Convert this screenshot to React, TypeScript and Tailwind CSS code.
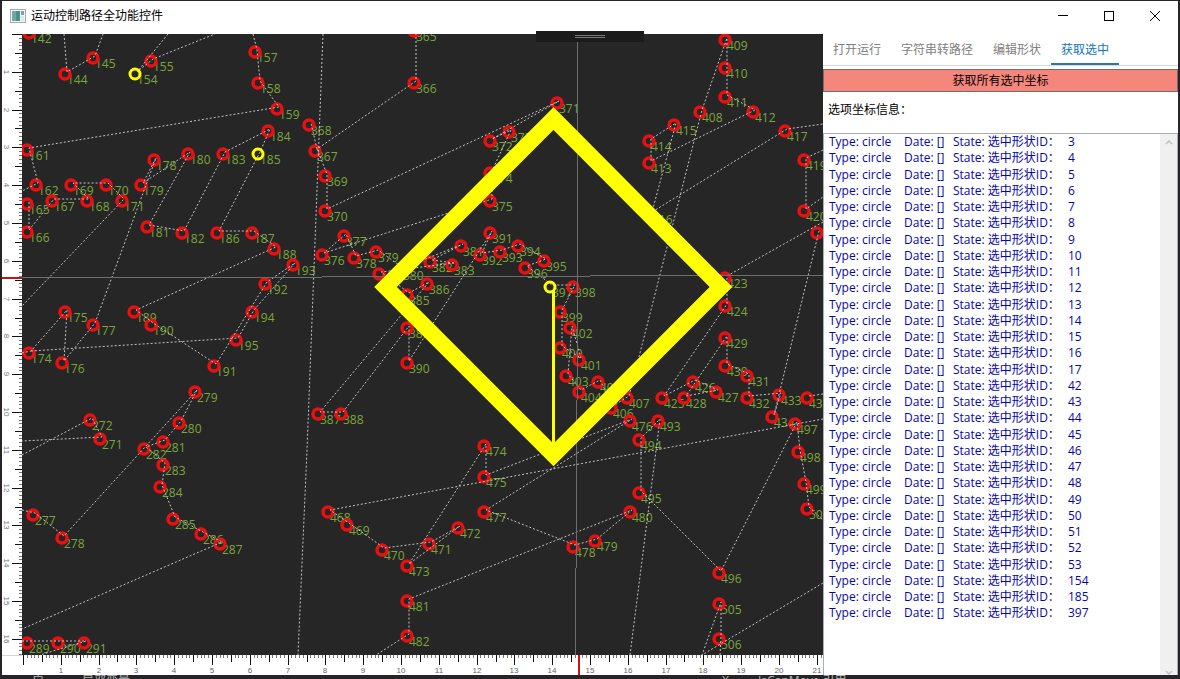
import { useEffect, useRef, useState } from "react";

interface Shape {
  id: number;
  x: number;
  y: number;
  selected?: boolean;
}

type Stop = number | [number, number];

const UNIT = 37.8;

const raw: [number, number, number][] = [
  [142, 29, 33], [144, 65, 74], [145, 93, 58], [154, 135, 74], [155, 151, 61],
  [157, 255, 52], [158, 258, 83], [159, 277, 109], [161, 27, 150], [162, 36, 185],
  [165, 27, 204], [166, 27, 232], [167, 52, 201], [168, 87, 201], [169, 71, 185],
  [170, 106, 185], [171, 122, 201], [174, 29, 353], [175, 65, 312], [176, 62, 363],
  [177, 93, 325], [178, 154, 160], [179, 141, 185], [180, 188, 154], [181, 147, 227],
  [182, 182, 233], [183, 223, 154], [184, 268, 131], [185, 258, 154], [186, 217, 233],
  [187, 252, 233], [188, 274, 249], [189, 134, 312], [190, 151, 325], [191, 214, 366],
  [192, 265, 284], [193, 293, 265], [194, 252, 312], [195, 236, 340],
  [271, 100, 439], [272, 90, 420], [277, 33, 515], [278, 62, 538], [279, 195, 392],
  [280, 179, 423], [281, 163, 442], [282, 144, 449], [283, 163, 465], [284, 160, 487],
  [285, 173, 519], [286, 201, 534], [287, 220, 544], [289, 27, 643], [290, 58, 643],
  [291, 84, 643],
  [365, 414, 31], [366, 414, 83], [367, 315, 151], [368, 309, 125], [369, 325, 176],
  [370, 325, 211], [371, 557, 103], [372, 490, 141], [373, 509, 132], [374, 490, 173],
  [375, 490, 201], [376, 322, 255], [377, 344, 236], [378, 354, 258], [379, 376, 252],
  [380, 401, 270], [384, 379, 274], [381, 461, 246], [382, 430, 262], [383, 452, 265],
  [385, 407, 295], [386, 427, 284], [387, 318, 414], [388, 341, 414], [389, 407, 328],
  [390, 407, 363], [391, 490, 233], [392, 480, 255], [393, 500, 252], [394, 518, 246],
  [395, 544, 261], [396, 525, 268], [397, 550, 287], [398, 573, 287], [399, 560, 312],
  [400, 560, 348], [401, 579, 360], [402, 570, 328], [403, 566, 376], [404, 579, 392],
  [405, 598, 382], [406, 611, 408], [407, 627, 398], [408, 700, 112], [409, 725, 40],
  [410, 725, 68], [411, 725, 97], [412, 753, 112], [413, 649, 163], [414, 649, 141],
  [415, 674, 125], [416, 650, 214], [417, 785, 131], [419, 804, 160], [420, 804, 211],
  [421, 817, 233], [423, 725, 278], [424, 725, 306], [425, 662, 398], [426, 693, 382],
  [427, 716, 392], [428, 684, 398], [429, 725, 338], [430, 725, 366], [431, 747, 376],
  [432, 747, 398], [433, 779, 395], [434, 772, 417], [435, 807, 398],
  [468, 328, 512], [469, 347, 525], [470, 382, 550], [471, 429, 544], [472, 458, 528],
  [473, 407, 566], [474, 484, 446], [475, 484, 477], [476, 630, 421], [477, 484, 512],
  [478, 573, 547], [479, 595, 541], [480, 630, 512], [481, 407, 601], [482, 407, 636],
  [493, 658, 421], [494, 639, 440], [495, 639, 493], [496, 719, 573], [497, 795, 424],
  [498, 798, 452], [499, 804, 484], [500, 807, 509], [505, 719, 604], [506, 719, 639],
];

const picked = [
  3, 4, 5, 6, 7, 8, 9, 10, 11, 12, 13, 14, 15, 16, 17, 42, 43, 44, 45, 46, 47, 48,
  49, 50, 51, 52, 53, 154, 185, 397,
];

// shapes that carry no label of their own
const unlabeled = [384, 421];

const shapes: Shape[] = raw.map(([id, x, y]) => ({ id, x, y, selected: picked.includes(id) }));
const byId = new Map(shapes.map((s) => [s.id, s]));

const range = (from: number, to: number) =>
  Array.from({ length: Math.max(0, to - from + 1) }, (_, i) => from + i);

// a stop is a shape id, or a point where the path leaves the view
const paths: Stop[][] = [
  [[64, 34], 144, 145, [103, 34]],
  [[168, 34], 154, 155, [215, 34]],
  [[253, 34], 157, 158, 159, 161, 162, [22, 191]],
  [165, 166, 167, 168, 169, 170, 171, [22, 306]],
  [[22, 353], 174, ...range(175, 195), 174],
  [[22, 455], 272, 271, [22, 441]],
  [[22, 510], 277, 278, 279, 280, 281, 282, 283, 284, 285, 286, 287, [22, 629]],
  [[22, 641], 289, 290, 291, [40, 655]],
  [[323, 34], [307, 450], [298, 655]],
  [365, 366, 367, 368],
  [367, 369, 370, 371, 372, 373, 374, 375, 376, 377, 378, 379, 380, 381, 382, 383],
  [383, 384, 385, 386, 387, 388, 389, 390, ...range(391, 417), [823, 124]],
  [[823, 150], 419, 420, [823, 197]],
  [[823, 222], 423, 424, 425, 426, 427, 428, 429, 430, 431, 432, 433, 434, 421],
  [[823, 394], 435],
  [[823, 419], 468, ...range(469, 482), [376, 655]],
  [[630, 655], 493, 494, 495, 496, 497, 498, 499, 500, [823, 520]],
  [[720, 655], 506, 505, [702, 655], [823, 583]],
];

const toPoints = (stops: Stop[]) =>
  stops
    .map((stop) => {
      if (typeof stop !== "number") return stop.join(",");
      const s = byId.get(stop);
      return s ? `${s.x + 2},${s.y - 2}` : "";
    })
    .join(" ");

const tabs = ["打开运行", "字符串转路径", "编辑形状", "获取选中"];

function Ruler({ vertical, origin, mark }: { vertical?: boolean; origin: number; mark: number }) {
  const ref = useRef<SVGSVGElement>(null);
  const [length, setLength] = useState(0);

  useEffect(() => {
    const el = ref.current;
    if (!el) return;
    const measure = () => {
      const box = el.getBoundingClientRect();
      setLength(vertical ? box.height : box.width);
    };
    measure();
    const observer = new ResizeObserver(measure);
    observer.observe(el);
    return () => observer.disconnect();
  }, [vertical]);

  const units = (length - origin) / UNIT;

  return (
    <svg ref={ref} className="block h-full w-full bg-white" aria-hidden="true">
      {range(0, Math.floor(units * 10)).map((i) => {
        const p = Math.round(origin + (i * UNIT) / 10) + 0.5;
        const len = i % 10 === 0 ? 10 : i % 5 === 0 ? 7 : 3;
        const stroke = i % 5 === 0 ? "#111" : "#777";
        return vertical ? (
          <line key={i} x1={20 - len} x2={20} y1={p} y2={p} stroke={stroke} />
        ) : (
          <line key={i} x1={p} x2={p} y1={0} y2={len} stroke={stroke} />
        );
      })}
      {range(1, Math.floor(units)).map((n) => {
        const p = Math.round(origin + n * UNIT);
        return vertical ? (
          <text key={n} transform={`translate(2 ${p}) rotate(90)`} textAnchor="middle" fontSize={8} fill="#777">
            {n}
          </text>
        ) : (
          <text key={n} x={p} y={18} textAnchor="middle" fontSize={8} fill="#666">
            {n}
          </text>
        );
      })}
      {vertical ? (
        <line x1={0} x2={20} y1={mark} y2={mark} stroke="#b51a1a" strokeWidth={2} />
      ) : (
        <line x1={mark} x2={mark} y1={0} y2={20} stroke="#cc1111" strokeWidth={2} />
      )}
    </svg>
  );
}

function PathCanvas() {
  return (
    <svg className="block h-full w-full bg-[#262626]" role="img" aria-label="路径">
      <g transform="translate(-22 -34)">
        <g fill="#7da63a" fontSize={12} fontWeight={500} fontFamily='"Open Sans", sans-serif'>
          {shapes
            .filter((s) => !unlabeled.includes(s.id))
            .map((s) => (
              <text key={s.id} x={s.x + 2} y={s.y + 10}>
                {s.id}
              </text>
            ))}
        </g>
        <g fill="none" stroke="#e81010" strokeWidth={3.5}>
          {shapes
            .filter((s) => !s.selected)
            .map((s) => (
              <circle key={s.id} cx={s.x} cy={s.y} r={5} />
            ))}
        </g>
        <g fill="none" stroke="#c4c4c4" strokeWidth={1} strokeDasharray="2 2">
          {paths.map((stops, i) => (
            <polyline key={i} points={toPoints(stops)} />
          ))}
        </g>
        <g fill="none" stroke="#6e6e6e" strokeWidth={1}>
          <path d="M22 277.5H322M322 276.5H590M590 275.5H2400" />
          <path d="M577.5 34V400M576.5 400V568M575.5 568V2000" />
        </g>
        <g fill="none" stroke="#ffff00">
          <path d="M553.5 118.5L721 287L553.5 455L385.5 287Z" strokeWidth={16} />
          <path d="M553.5 290V450" strokeWidth={3} />
          {shapes
            .filter((s) => s.selected)
            .map((s) => (
              <circle key={s.id} cx={s.x} cy={s.y} r={5} strokeWidth={3} />
            ))}
        </g>
      </g>
    </svg>
  );
}

function TitleBar() {
  return (
    <header className="flex h-[33px] shrink-0 items-center bg-white">
      <svg className="mb-1 ml-2 shrink-0" width="16" height="14" viewBox="0 0 16 14" aria-hidden="true">
        <rect x="0.5" y="0.5" width="15" height="13" fill="#f2f5f6" stroke="#a3adb3" />
        <rect x="2" y="2" width="8" height="10" fill="#4f8f8b" />
        <rect x="2" y="2" width="4" height="10" fill="#6faaa2" />
        <rect x="11" y="2" width="3" height="4" fill="#7f9fb0" />
        <rect x="11" y="7" width="3" height="5" fill="#dfe6ea" />
      </svg>
      <h1 className="mb-1 ml-1 flex-1 pl-px text-xs text-black">运动控制路径全功能控件</h1>
      <button type="button" aria-label="最小化" className="flex h-full w-[46px] items-center justify-center pb-1">
        <svg width="10" height="10" aria-hidden="true">
          <path d="M0 4.5H10" stroke="#000" />
        </svg>
      </button>
      <button type="button" aria-label="最大化" className="flex h-full w-[46px] items-center justify-center pb-1">
        <svg width="10" height="10" aria-hidden="true">
          <rect x="0.5" y="0.5" width="9" height="9" fill="none" stroke="#000" />
        </svg>
      </button>
      <button type="button" aria-label="关闭" className="flex h-full w-[46px] items-center justify-center pb-1">
        <svg width="10" height="10" aria-hidden="true">
          <path d="M0 0L10 10M10 0L0 10" stroke="#000" />
        </svg>
      </button>
    </header>
  );
}

export default function App() {
  const [active, setActive] = useState("获取选中");

  return (
    <div className="flex h-screen flex-col overflow-hidden bg-[#262429] pt-px font-['Open_Sans','Noto_Sans_CJK_SC',sans-serif]">
      <div className="mx-[2px] flex min-h-0 flex-1 flex-col bg-white">
        <TitleBar />
        <div className="flex min-h-0 flex-1">
          <main className="grid min-w-0 flex-1 grid-cols-[20px_minmax(0,1fr)] grid-rows-[minmax(0,1fr)_20px] font-['Liberation_Sans',sans-serif]">
            <Ruler vertical origin={0} mark={244} />
            <PathCanvas />
            <div className="border-t border-gray-300 bg-white" />
            <Ruler origin={1} mark={557} />
          </main>

          <aside className="flex w-[355px] shrink-0 flex-col bg-white text-xs">
            <div role="tablist" className="flex h-8 shrink-0 border-b border-[#d5dce1]">
              {tabs.map((tab) => (
                <button
                  key={tab}
                  type="button"
                  role="tab"
                  aria-selected={tab === active}
                  onClick={() => setActive(tab)}
                  className={`border-b-2 px-[10px] pt-0.5 ${
                    tab === active ? "border-[#2a7aa8] text-[#0f75bd]" : "border-transparent text-[#808080]"
                  }`}
                >
                  {tab}
                </button>
              ))}
            </div>
            <button
              type="button"
              className="mt-[3px] h-[23px] shrink-0 border border-[#7a6a6a] bg-[#f4867b] text-black"
            >
              获取所有选中坐标
            </button>
            <h2 className="flex h-[41px] shrink-0 items-center pb-1.5 pl-[5px] text-black">选项坐标信息：</h2>
            <div className="flex min-h-0 flex-1 border border-b-0 border-[#a9adb5]">
              <ul className="min-w-0 flex-1 overflow-hidden pl-[5px] leading-4 text-[#0606a8]">
                {picked.map((id) => (
                  <li key={id} className="flex h-4 whitespace-pre nth-[4n+3]:mt-px">
                    <span className="w-[75px]">Type: circle</span>
                    <span className="w-[49px]">Date: []</span>
                    <span className="w-[115px]">State: 选中形状ID：</span>
                    <span>{id}</span>
                  </li>
                ))}
              </ul>
              <div className="flex w-[17px] shrink-0 flex-col items-center justify-between bg-[#f0f0f0] pt-1" aria-hidden="true">
                <svg width="8" height="8">
                  <path d="M1 6L4 3L7 6" fill="none" stroke="#c0c0c0" strokeWidth="1.5" />
                </svg>
                <svg width="8" height="4">
                  <path d="M1 0L4 3L7 0" fill="none" stroke="#c0c0c0" strokeWidth="1.5" />
                </svg>
              </div>
            </div>
          </aside>
        </div>
      </div>

      <div className="flex h-1 shrink-0 overflow-hidden text-xs leading-none text-[#b9b9b9]" aria-hidden="true">
        <span className="ml-8 w-[50px]">启</span>
        <span className="w-[640px]">局部变量</span>
        <span className="w-9">X</span>
        <span>IsCanMove 引用</span>
      </div>

      <div className="absolute left-1/2 top-[31px] flex h-[11px] w-[108px] -translate-x-1/2 flex-col items-center justify-center gap-px bg-[#1b1b1b]">
        <div className="h-px w-[30px] bg-[#777]" />
        <div className="h-px w-[30px] bg-[#777]" />
      </div>
    </div>
  );
}
